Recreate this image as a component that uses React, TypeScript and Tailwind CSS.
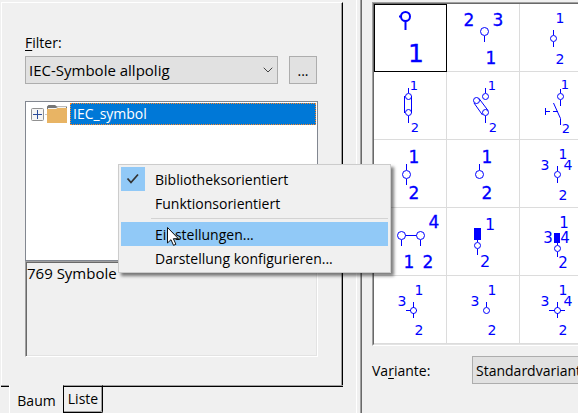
import { useState, type ReactNode } from "react";
import { ChevronDown } from "lucide-react";
import clsx from "clsx";

type Digit = [value: string, x: number, baseline: number, size: number];

interface SymbolDef {
  id: string;
  bold?: boolean;
  digits: Digit[];
  shape: ReactNode;
}

// Every symbol is drawn in a 72 x 67 box
const SYMBOLS: SymbolDef[] = [
  {
    id: "terminal-1",
    bold: true,
    digits: [["1", 42, 58, 25]],
    shape: (
      <g strokeWidth="2">
        <circle cx="31.5" cy="12.5" r="4.5" />
        <path d="M31.5 17v9M25 12.5h2" />
      </g>
    ),
  },
  {
    id: "terminal-3",
    bold: true,
    digits: [["2", 22, 22, 17], ["3", 51, 22, 17], ["1", 44, 60, 17]],
    shape: (
      <>
        <circle cx="37.5" cy="27.5" r="4" />
        <path d="M37.5 32v6" />
      </>
    ),
  },
  {
    id: "terminal-2",
    digits: [["1", 40, 19, 14], ["2", 40, 60, 14]],
    shape: (
      <>
        <circle cx="33.5" cy="34.5" r="3" />
        <path d="M33.5 26v5M33.5 38v5" />
      </>
    ),
  },
  {
    id: "link-closed",
    digits: [["1", 40, 18, 13], ["2", 41, 60, 13]],
    shape: (
      <>
        <circle cx="34.5" cy="24.5" r="3" />
        <circle cx="34.5" cy="40.5" r="3" />
        <path d="M34.5 16v5M34.5 44v7M30.5 24v17M37.5 24v17" />
      </>
    ),
  },
  {
    id: "link-open",
    digits: [["1", 45, 18, 13], ["2", 46, 60, 13]],
    shape: (
      <>
        <circle cx="38.5" cy="24.5" r="3" />
        <circle cx="29.5" cy="28.5" r="3" />
        <circle cx="38.5" cy="40.5" r="3" />
        <path d="M38.5 16v5M38.5 44v7M27 31l8.5 12M32 26.5l9 12" />
      </>
    ),
  },
  {
    id: "switch",
    digits: [["1", 45, 17, 13], ["2", 46, 61, 13]],
    shape: (
      <>
        <circle cx="40.5" cy="24.5" r="3" />
        <path d="M40.5 17v4M40.5 28v6M33.5 31l7 15.5v6.5M25.5 36v7M26 39.5h4M33 39.5h5" />
      </>
    ),
  },
  {
    id: "through",
    bold: true,
    digits: [["1", 40, 23, 17], ["2", 40, 59, 17]],
    shape: (
      <>
        <circle cx="32.5" cy="34.5" r="4" />
        <path d="M32.5 24v6M32.5 39v6" />
      </>
    ),
  },
  {
    id: "through-open",
    bold: true,
    digits: [["1", 40, 23, 17], ["2", 40, 59, 17]],
    shape: (
      <>
        <circle cx="32.5" cy="34.5" r="4" />
        <path d="M32.5 24v6" />
      </>
    ),
  },
  {
    id: "four-a",
    digits: [["1", 43, 19, 14], ["3", 25, 30, 14], ["4", 48, 30, 14], ["2", 43, 60, 14]],
    shape: (
      <>
        <circle cx="37.5" cy="34.5" r="3" />
        <path d="M37.5 26v5M37.5 38v5" />
      </>
    ),
  },
  {
    id: "bridge",
    bold: true,
    digits: [["4", 60, 20, 17], ["1", 35, 60, 17], ["2", 54, 60, 17]],
    shape: (
      <>
        <circle cx="27.5" cy="27.5" r="4" />
        <circle cx="46.5" cy="27.5" r="4" />
        <path d="M31.5 27.5h11M27.5 32v6M46.5 32v6" />
      </>
    ),
  },
  {
    id: "plug-2",
    digits: [["1", 43, 22, 16], ["2", 38, 59, 16]],
    shape: (
      <>
        <rect x="27.5" y="20.5" width="6" height="11" fill="currentColor" />
        <circle cx="30.5" cy="37.5" r="3" />
        <path d="M30.5 31v3M30.5 41v6" />
      </>
    ),
  },
  {
    id: "plug-4",
    digits: [["1", 44, 20, 15], ["3", 28, 35, 15], ["4", 45, 35, 15], ["2", 43, 60, 15]],
    shape: (
      <>
        <rect x="34.5" y="25.5" width="5" height="9" fill="currentColor" />
        <circle cx="37.5" cy="40.5" r="3" />
        <path d="M37.5 35v2M37.5 44v5" />
      </>
    ),
  },
  {
    id: "cross-3",
    digits: [["1", 45, 19, 14], ["3", 28, 30, 14], ["2", 45, 59, 14]],
    shape: (
      <>
        <circle cx="39.5" cy="34.5" r="3" />
        <path d="M39.5 26v6M39.5 37v5M32 34.5h5M42 34.5h1" />
      </>
    ),
  },
  {
    id: "cross-open",
    digits: [["1", 45, 19, 14], ["3", 28, 30, 14], ["2", 45, 59, 14]],
    shape: (
      <>
        <circle cx="39.5" cy="34.5" r="3" />
        <path d="M39.5 26v5" />
      </>
    ),
  },
  {
    id: "cross-4",
    digits: [["1", 43, 19, 14], ["3", 25, 30, 14], ["4", 48, 30, 14], ["2", 43, 59, 14]],
    shape: (
      <>
        <circle cx="37.5" cy="34.5" r="3" />
        <path d="M37.5 26v6M37.5 37v5M29 34.5h6M40 34.5h5" />
      </>
    ),
  },
];

interface SymbolCellProps {
  symbol: SymbolDef;
  selected: boolean;
  onSelect: () => void;
}

const SymbolCell = ({ symbol, selected, onSelect }: SymbolCellProps) => (
  <button
    type="button"
    aria-label={symbol.id}
    onClick={onSelect}
    className={clsx(
      "h-17 border-r border-b border-[#dcdcdc] bg-white",
      selected && "outline outline-1 -outline-offset-1 outline-black"
    )}
  >
    <svg viewBox="0 0 72 67" width="72" height="67" fill="none" stroke="currentColor" className="block text-[#0000ff]">
      {symbol.shape}
      {symbol.digits.map(([value, x, baseline, size]) => (
        <text
          key={value}
          x={x}
          y={baseline}
          fontSize={size}
          textAnchor="middle"
          fill="currentColor"
          stroke={symbol.bold ? "currentColor" : "none"}
          strokeWidth="0.3"
          className="font-['DejaVu_Sans',sans-serif]"
        >
          {value}
        </text>
      ))}
    </svg>
  </button>
);

const FolderIcon = () => (
  <svg viewBox="0 0 20 18" width="20" height="18" className="shrink-0">
    <path d="M0 4V1.5L1.5 0H8l2 1.5h10V4z" fill="#767676" />
    <path d="M1 3h8l2-1h8v2H1z" fill="#f4f4f4" />
    <path d="M0 4h9l1.500-1H20v15H0z" fill="#e8b464" />
  </svg>
);

const MousePointer = () => (
  <svg viewBox="0 0 12 19" width="12" height="19" className="pointer-events-none absolute top-[227px] left-[167px]">
    <path d="M.5.5v15.500l3.500-3.300 2.500 5.600 2.400-1-2.500-5.600h5z" fill="#fff" stroke="#111" />
  </svg>
);

const ContextMenu = () => {
  const [mode, setMode] = useState("Bibliotheksorientiert");

  return (
    <div
      role="menu"
      className="absolute top-[164px] left-[118px] w-[273px] border border-[#cccccc] bg-[#f0f0f0] p-0.5 shadow-[3px_3px_3px_rgba(0,0,0,0.5)]"
    >
      {["Bibliotheksorientiert", "Funktionsorientiert"].map((label) => (
        <button
          key={label}
          type="button"
          role="menuitemradio"
          aria-checked={mode === label}
          onClick={() => setMode(label)}
          className="flex h-6 w-full items-center gap-2.5 text-left"
        >
          <span className={clsx("flex size-6 items-center justify-center", mode === label && "bg-[#91c9f7]")}>
            {mode === label && (
              <svg viewBox="0 0 14 12" width="14" height="12" fill="none" stroke="#333" strokeWidth="1.8">
                <path d="M1.5 5.5l3.500 4 7-8" />
              </svg>
            )}
          </span>
          {label}
        </button>
      ))}
      <div role="separator" className="my-[3px] ml-[30px] h-px bg-[#d3d3d3]" />
      <button type="button" role="menuitem" className="block h-6 w-full bg-[#91c9f7] pl-[34px] text-left">
        Einstellungen...
      </button>
      <button type="button" role="menuitem" className="block h-6 w-full pl-[34px] text-left">
        Darstellung konfigurieren...
      </button>
    </div>
  );
};

const FilterPanel = () => (
  <div className="flex grow flex-col border-t border-r border-l border-t-white border-r-black border-l-white">
    <div className="flex grow flex-col border-r border-[#a0a0a0] px-[23px] pt-7 pb-7">
      <label htmlFor="filter" className="h-[25px] leading-6">
        <span className="underline underline-offset-2">F</span>ilter:
      </label>
      <div className="mr-px flex gap-[11px]">
        <div className="relative grow">
          <select id="filter" className="h-7 w-full appearance-none border border-[#adadad] bg-[#e1e1e1] pl-[3px] text-[15px]">
            <option>IEC-Symbole allpolig</option>
          </select>
          <ChevronDown className="pointer-events-none absolute top-1.5 right-0.5 size-4 text-[#444]" strokeWidth={1.5} />
        </div>
        <button type="button" className="size-7 border border-[#adadad] bg-[#e1e1e1]">
          ...
        </button>
      </div>
      <div role="tree" className="mt-[17px] h-[160px] border border-[#828790] bg-white p-px">
        <div role="treeitem" aria-selected="true" className="flex h-[22px] items-center">
          <svg viewBox="0 0 16 13" width="16" height="13" className="ml-1 shrink-0" fill="none">
            <rect x=".5" y=".5" width="12" height="12" rx="1" fill="#f5f5f5" stroke="#919191" />
            <path d="M2 6.5h9M6.5 2v9" stroke="#2b4c9b" />
            <path d="M14.5 6.5h1" stroke="#919191" />
          </svg>
          <FolderIcon />
          <span className="ml-[3px] h-full grow border border-dotted border-[#ff8728] bg-[#0078d7] pl-0.5 leading-5 text-white">
            IEC_symbol
          </span>
        </div>
      </div>
      <div className="h-24 border border-t-[#a0a0a0] border-r-white border-b-white border-l-[#a0a0a0] pl-px text-[15px] leading-[22px] shadow-[inset_1px_1px_#696969,inset_-1px_-1px_#e3e3e3]">
        769 Symbole
      </div>
    </div>
  </div>
);

const TabBar = () => (
  <div role="tablist" className="flex h-[30px] shrink-0 items-start">
    <span className="h-2 w-2 border-t border-[#a0a0a0] shadow-[inset_0_1px_#000]" />
    <button type="button" role="tab" aria-selected="true" className="h-full w-[54px] border-l border-white">
      Baum
    </button>
    <button
      type="button"
      role="tab"
      aria-selected="false"
      className="h-7 w-10 rounded-br-xs border border-t-[#a0a0a0] border-r-black border-b-black border-l-black leading-6 shadow-[inset_0_1px_#000,inset_-1px_-1px_#a0a0a0]"
    >
      Liste
    </button>
    <span className="h-2 grow border-t border-[#a0a0a0] shadow-[inset_0_1px_#000]" />
  </div>
);

const SymbolPanel = () => {
  const [selected, setSelected] = useState("terminal-1");

  return (
    <main className="min-w-0 grow overflow-hidden border-l border-[#a0a0a0] pt-0.5 pl-[11px] shadow-[inset_1px_0_#696969]">
      <div className="w-max border-t border-b border-l border-t-[#a0a0a0] border-b-white border-l-[#a0a0a0]">
        <div className="grid grid-cols-[repeat(3,73px)] border-t border-b border-l border-t-[#696969] border-b-[#e3e3e3] border-l-[#696969]">
          {SYMBOLS.map((symbol) => (
            <SymbolCell
              key={symbol.id}
              symbol={symbol}
              selected={selected === symbol.id}
              onSelect={() => setSelected(symbol.id)}
            />
          ))}
        </div>
      </div>
      <div className="mt-2.5 flex items-center">
        <label htmlFor="variant" className="w-[100px] shrink-0">
          Va<span className="underline underline-offset-2">r</span>iante:
        </label>
        <select id="variant" className="h-7 w-[180px] shrink-0 appearance-none border border-[#adadad] bg-[#e1e1e1] pl-[3px]">
          <option>Standardvariante</option>
        </select>
      </div>
    </main>
  );
};

export default function App() {
  return (
    <div className="relative flex min-h-screen overflow-hidden bg-[#f0f0f0] font-['Open_Sans','Noto_Sans',sans-serif] text-[14px] text-black">
      <aside className="flex w-[357px] shrink-0 flex-col border-r border-white pt-0.5 pr-[13px] pl-px">
        <FilterPanel />
        <TabBar />
      </aside>
      <div className="w-[3px] shrink-0" />
      <SymbolPanel />
      <ContextMenu />
      <MousePointer />
    </div>
  );
}
